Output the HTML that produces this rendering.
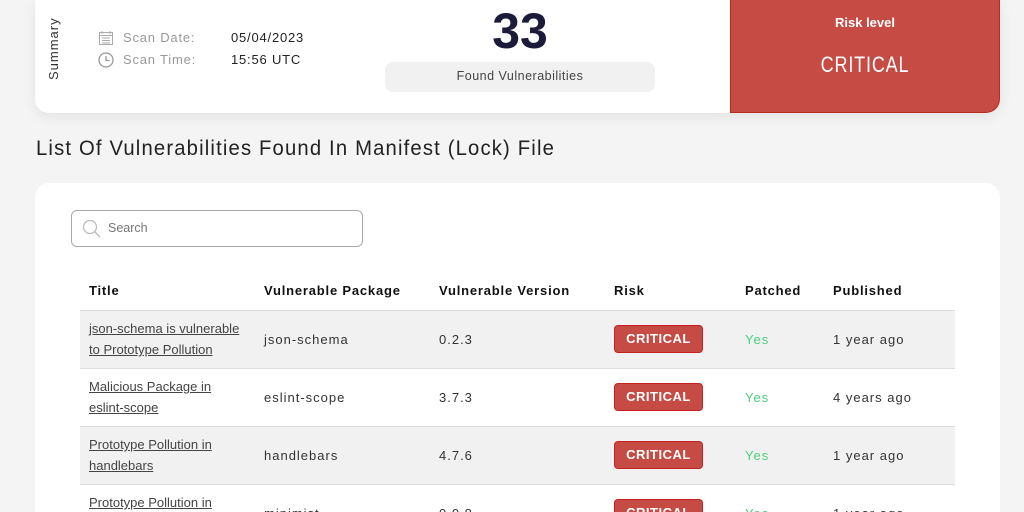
<!DOCTYPE html>
<html style="height:512px;overflow:hidden"><head><style>
*{margin:0;padding:0;box-sizing:border-box}
body{width:1024px;height:512px;overflow:hidden;background:#f4f4f4;font-family:"Liberation Sans",sans-serif;position:relative}
.top{position:absolute;left:35px;top:0;width:965px;height:113px;background:#fff;border-radius:0 0 14px 14px;box-shadow:0 4px 14px rgba(0,0,0,.07);overflow:hidden}
.red{position:absolute;left:730px;top:0;width:270px;height:113px;background:#c64b45;border:1px solid #b82a22;border-top:none;border-radius:0 0 14px 0}
.sum{position:absolute;left:46px;top:80px;transform-origin:0 0;transform:rotate(-90deg);font-size:13px;color:#333;letter-spacing:1px}
.lbl{position:absolute;font-size:13px;color:#999;letter-spacing:.8px}
.val{position:absolute;font-size:13px;color:#222;letter-spacing:.8px}
.big{position:absolute;left:470px;top:2px;width:100px;text-align:center;font-size:50px;font-weight:bold;color:#1c1c3a}
.fv{position:absolute;left:385px;top:62px;width:270px;height:30px;background:#f1f1f1;border-radius:8px;text-align:center;line-height:28px;font-size:12.5px;color:#444;letter-spacing:.5px}
h2{position:absolute;left:36px;top:137px;font-size:21px;font-weight:normal;color:#222;letter-spacing:1.2px;transform:scaleX(.965);transform-origin:0 0;white-space:nowrap}
.card{position:absolute;left:35px;top:183px;width:965px;height:329px;background:#fff;border-radius:14px 14px 0 0;overflow:hidden}
.search{position:absolute;left:71px;top:210px;width:292px;height:37px;border:1px solid #aaa;border-radius:6px}
.search span{position:absolute;left:36px;top:10px;font-size:12.5px;color:#777}
.tw{position:absolute;left:80px;top:272px;width:875px;height:240px;overflow:hidden}
table{width:875px;border-collapse:collapse}
th{text-align:left;font-size:13px;letter-spacing:.8px;color:#111;height:38px;padding-left:9px;border-bottom:1px solid #ddd}
td{height:58px;font-size:13px;color:#333;letter-spacing:1px;padding-left:9px;border-bottom:1px solid #ddd}
tr.g td{background:#f1f1f1}
td a{color:#444;text-decoration:underline;letter-spacing:0;line-height:21px;font-size:13px}
.b{display:inline-block;width:89px;height:28px;background:#c64b45;border:1px solid #c62020;border-radius:4px;color:#fff;font-weight:bold;text-align:center;line-height:26px;font-size:13px;letter-spacing:.5px}
.y{color:#4ccf7c}
</style></head><body>
<div class="top"></div>
<div class="sum">Summary</div>
<svg style="position:absolute;left:98px;top:30px" width="16" height="16" viewBox="0 0 16 16" fill="none" stroke="#aaa"><rect x="1.5" y="2.5" width="13" height="12"/><path d="M1.5 5.5h13M4 1v3M12 1v3M4 8h8M4 10.5h8M4 13h8"/></svg>
<svg style="position:absolute;left:98px;top:52px" width="16" height="16" viewBox="0 0 16 16" fill="none" stroke="#999" stroke-width="1.3"><circle cx="8" cy="8" r="7"/><path d="M8 4v4.5h3.5"/></svg>
<div class="lbl" style="left:123px;top:30px">Scan Date:</div>
<div class="lbl" style="left:123px;top:52px">Scan Time:</div>
<div class="val" style="left:231px;top:30px">05/04/2023</div>
<div class="val" style="left:231px;top:52px">15:56 UTC</div>
<div class="big">33</div>
<div class="fv">Found Vulnerabilities</div>
<div class="red"></div>
<div style="position:absolute;left:730px;top:15px;width:270px;text-align:center;color:#fff;font-size:13px;font-weight:bold">Risk level</div>
<div style="position:absolute;left:730px;top:52px;width:270px;text-align:center;color:#fff;font-size:22px;letter-spacing:1px;transform:scaleX(.82)">CRITICAL</div>
<h2>List Of Vulnerabilities Found In Manifest (Lock) File</h2>
<div class="card"></div>
<div class="search"><svg style="position:absolute;left:10px;top:8px" width="20" height="20" viewBox="0 0 20 20" fill="none" stroke="#bbb" stroke-width="1.3"><circle cx="8" cy="8" r="6.5"/><path d="M13 13l5 5"/></svg><span>Search</span></div>
<div class="tw">
<table>
<colgroup><col style="width:175px"><col style="width:175px"><col style="width:175px"><col style="width:131px"><col style="width:88px"><col></colgroup>
<tr><th>Title</th><th>Vulnerable Package</th><th>Vulnerable Version</th><th>Risk</th><th>Patched</th><th>Published</th></tr>
<tr class="g"><td><a>json-schema is vulnerable<br>to Prototype Pollution</a></td><td>json-schema</td><td>0.2.3</td><td><span class="b">CRITICAL</span></td><td class="y">Yes</td><td>1 year ago</td></tr>
<tr><td><a>Malicious Package in<br>eslint-scope</a></td><td>eslint-scope</td><td>3.7.3</td><td><span class="b">CRITICAL</span></td><td class="y">Yes</td><td>4 years ago</td></tr>
<tr class="g"><td><a>Prototype Pollution in<br>handlebars</a></td><td>handlebars</td><td>4.7.6</td><td><span class="b">CRITICAL</span></td><td class="y">Yes</td><td>1 year ago</td></tr>
<tr><td><a>Prototype Pollution in<br>minimist</a></td><td>minimist</td><td>0.0.8</td><td><span class="b">CRITICAL</span></td><td class="y">Yes</td><td>1 year ago</td></tr>
</table>
</div>
</body></html>
